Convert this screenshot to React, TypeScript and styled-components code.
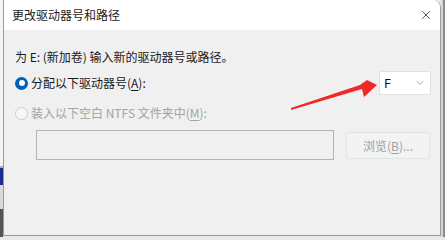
import React from "react";
import styled, { createGlobalStyle } from "styled-components";
import { X, ChevronDown } from "lucide-react";

const Global = createGlobalStyle`
  html, body { margin: 0; padding: 0; }
  body { background: #e9e9e9; font-family: "Noto Sans CJK SC", "Microsoft YaHei", sans-serif; }
`;

const Page = styled.div`
  width: 445px;
  height: 237px;
  display: flex;
  overflow: hidden;
  position: relative;
`;

const Backdrop = styled.div<{ $w: number; $bg: string }>`
  width: ${(p) => p.$w}px;
  flex: none;
  background: ${(p) => p.$bg};
`;

const Window = styled.div`
  width: 438px;
  height: 236px;
  box-sizing: border-box;
  border: 1px solid #9a9a9a;
  border-top: none;
  border-top-right-radius: 8px;
  display: flex;
  flex-direction: column;
  background: #f0f0f0;
  overflow: hidden;
`;

const TitleBar = styled.div`
  height: 30px;
  flex: none;
  background: #ffffff;
  display: flex;
  align-items: center;
  justify-content: space-between;
  padding: 0 4px 0 8px;
`;

const Title = styled.span`
  font-size: 12px;
  color: #1a1a1a;
  line-height: 18px;
`;

const CloseBtn = styled.div`
  width: 20px;
  height: 20px;
  display: flex;
  align-items: center;
  justify-content: center;
  color: #222;
`;

const Body = styled.div`
  flex: 1;
  display: flex;
  flex-direction: column;
  padding: 18px 9px 0 11px;
`;

const Text = styled.div<{ $disabled?: boolean }>`
  font-size: 12px;
  line-height: 18px;
  color: ${(p) => (p.$disabled ? "#a3a3a3" : "#1a1a1a")};
  white-space: nowrap;
`;

const Row = styled.div<{ $mt: number }>`
  margin-top: ${(p) => p.$mt}px;
  display: flex;
  align-items: center;
  justify-content: space-between;
`;

const RadioLabel = styled.label`
  display: flex;
  align-items: center;
  gap: 3px;
`;

const Radio = styled.span<{ $checked?: boolean; $disabled?: boolean }>`
  width: 13px;
  height: 13px;
  border-radius: 50%;
  box-sizing: border-box;
  flex: none;
  background: ${(p) => (p.$checked ? "#005fb8" : "#f7f7f7")};
  border: ${(p) => (p.$checked ? "none" : "1px solid #cdcdcd")};
  display: flex;
  align-items: center;
  justify-content: center;
  &::after {
    content: "";
    display: ${(p) => (p.$checked ? "block" : "none")};
    width: 6px;
    height: 6px;
    border-radius: 50%;
    background: #fff;
  }
`;

const U = styled.span`
  text-decoration: underline;
  text-underline-offset: 2px;
`;

const Select = styled.div`
  width: 52px;
  height: 24px;
  box-sizing: border-box;
  background: #fff;
  border: 1px solid #e1e1e1;
  border-radius: 2px;
  display: flex;
  align-items: center;
  justify-content: space-between;
  padding: 0 4px 0 4px;
  font-size: 13px;
  color: #111;
  font-family: "Segoe UI", "Noto Sans", sans-serif;
`;

const FolderRow = styled.div`
  margin-top: 8px;
  padding-left: 21px;
  padding-right: 1px;
  display: flex;
  align-items: center;
  justify-content: space-between;
`;

const FolderInput = styled.div`
  width: 298px;
  height: 30px;
  box-sizing: border-box;
  border: 1px solid #b4b4b4;
  background: #f0f0f0;
`;

const Button = styled.div`
  width: 84px;
  height: 27px;
  box-sizing: border-box;
  border: 1px solid #e3e3e3;
  border-radius: 3px;
  background: #f3f3f3;
  display: flex;
  align-items: center;
  justify-content: center;
  font-size: 12px;
  color: #a0a0a0;
`;

const Arrow = styled.svg`
  position: absolute;
  left: 0;
  top: 0;
  pointer-events: none;
`;

export default function App() {
  return (
    <>
      <Global />
      <Page>
        <Backdrop $w={3} $bg="linear-gradient(#f4f4f4 0 70%, #b0b0b0 70% 71%, #1c2a8a 71% 78%, #d8d8d8 78% 88%, #555 88% 100%)" />
        <Window>
          <TitleBar>
            <Title>更改驱动器号和路径</Title>
            <CloseBtn>
              <X size={14} strokeWidth={1.3} />
            </CloseBtn>
          </TitleBar>
          <Body>
            <Text>为 E: (新加卷) 输入新的驱动器号或路径。</Text>
            <Row $mt={5}>
              <RadioLabel>
                <Radio $checked />
                <Text>
                  分配以下驱动器号(<U>A</U>):
                </Text>
              </RadioLabel>
              <Select>
                <span>F</span>
                <ChevronDown size={12} color="#777" strokeWidth={1.3} />
              </Select>
            </Row>
            <Row $mt={9}>
              <RadioLabel>
                <Radio $disabled />
                <Text $disabled>
                  装入以下空白 NTFS 文件夹中(<U>M</U>):
                </Text>
              </RadioLabel>
            </Row>
            <FolderRow>
              <FolderInput />
              <Button>
                浏览(<U>B</U>)...
              </Button>
            </FolderRow>
          </Body>
        </Window>
        <Backdrop $w={4} $bg="linear-gradient(90deg, #d6d6d6 0 40%, #8a8a95 40% 100%)" />
        <Arrow width="445" height="237" viewBox="0 0 445 237">
          <polygon
            points="291,110 362,89 364,97 377,85 367,80 360,85 291,108"
            fill="#f02828"
          />
        </Arrow>
      </Page>
    </>
  );
}
